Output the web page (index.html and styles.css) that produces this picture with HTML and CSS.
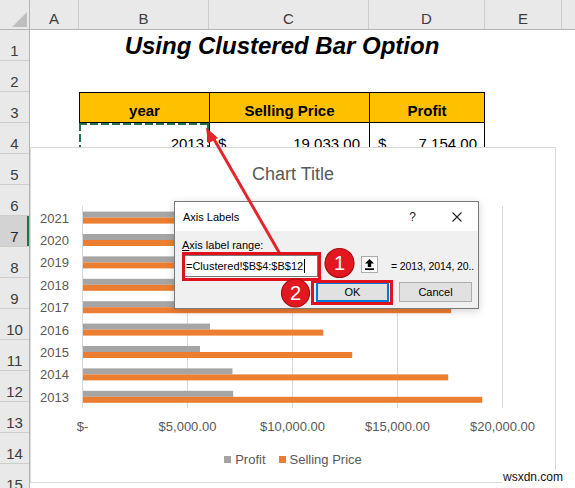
FILE: index.html
```html
<!DOCTYPE html>
<html>
<head>
<meta charset="utf-8">
<title>Using Clustered Bar Option</title>
<link rel="stylesheet" href="styles.css">
</head>
<body>
<div class="sheet">
  <div class="corner"><span class="tri"></span></div>
  <div class="colheads">
    <div class="ch col-a">A</div>
    <div class="ch col-b">B</div>
    <div class="ch col-c">C</div>
    <div class="ch col-d">D</div>
    <div class="ch col-e">E</div>
    <div class="ch col-f"></div>
  </div>
  <div class="rowheads">
    <div class="rh">1</div>
    <div class="rh">2</div>
    <div class="rh">3</div>
    <div class="rh">4</div>
    <div class="rh">5</div>
    <div class="rh">6</div>
    <div class="rh sel">7</div>
    <div class="rh">8</div>
    <div class="rh">9</div>
    <div class="rh">10</div>
    <div class="rh">11</div>
    <div class="rh">12</div>
    <div class="rh">13</div>
    <div class="rh">14</div>
    <div class="rh">15</div>
  </div>
  <div class="cells">
    <div class="title">Using Clustered Bar Option</div>
    <div class="th th-b">year</div>
    <div class="th th-c">Selling Price</div>
    <div class="th th-d">Profit</div>
    <div class="cell cell-b">2013</div>
    <div class="cell acct cell-c"><span>$</span><span>19,033.00</span></div>
    <div class="cell acct cell-d"><span>$</span><span>7,154.00</span></div>
  </div>

  <div class="chart">
    <div class="chart-title">Chart Title</div>
    <svg class="plot" width="524" height="243" viewBox="0 0 524 243">
      <g class="grid-lines">
        <line x1="51.5" y1="6" x2="51.5" y2="208"/>
        <line x1="156.5" y1="6" x2="156.5" y2="208"/>
        <line x1="261.5" y1="6" x2="261.5" y2="208"/>
        <line x1="366.5" y1="6" x2="366.5" y2="208"/>
        <line x1="471.5" y1="6" x2="471.5" y2="208"/>
      </g>
      <g class="bars-profit">
        <rect x="52" y="190.8" width="150.2" height="6"/>
        <rect x="52" y="168.4" width="149.5" height="6"/>
        <rect x="52" y="146" width="117" height="6"/>
        <rect x="52" y="123.6" width="127" height="6"/>
        <rect x="52" y="101.2" width="135" height="6"/>
        <rect x="52" y="78.8" width="142" height="6"/>
        <rect x="52" y="56.4" width="138" height="6"/>
        <rect x="52" y="34" width="128" height="6"/>
        <rect x="52" y="11.6" width="155" height="6"/>
      </g>
      <g class="bars-price">
        <rect x="52" y="196.8" width="399.2" height="6"/>
        <rect x="52" y="174.4" width="365.2" height="6"/>
        <rect x="52" y="152" width="269.2" height="6"/>
        <rect x="52" y="129.6" width="240.2" height="6"/>
        <rect x="52" y="107.2" width="368.2" height="6"/>
        <rect x="52" y="84.8" width="330" height="6"/>
        <rect x="52" y="62.4" width="310" height="6"/>
        <rect x="52" y="40" width="290" height="6"/>
        <rect x="52" y="17.6" width="345" height="6"/>
      </g>
      <g class="ylab">
        <text x="38" y="201.7">2013</text>
        <text x="38" y="179.3">2014</text>
        <text x="38" y="156.9">2015</text>
        <text x="38" y="134.5">2016</text>
        <text x="38" y="112.1">2017</text>
        <text x="38" y="89.7">2018</text>
        <text x="38" y="67.3">2019</text>
        <text x="38" y="44.9">2020</text>
        <text x="38" y="22.5">2021</text>
      </g>
      <g class="xlab">
        <text x="51.5" y="230.7">$-</text>
        <text x="156.5" y="230.7">$5,000.00</text>
        <text x="261.5" y="230.7">$10,000.00</text>
        <text x="366.5" y="230.7">$15,000.00</text>
        <text x="471.5" y="230.7">$20,000.00</text>
      </g>
    </svg>
    <div class="legend">
      <div class="leg-item"><span class="sw sw-profit"></span><span>Profit</span></div>
      <div class="leg-item"><span class="sw sw-price"></span><span>Selling Price</span></div>
    </div>
  </div>

  <div class="dialog">
    <div class="dlg-titlebar">
      <span class="dlg-title">Axis Labels</span>
      <span class="dlg-help">?</span>
      <svg class="dlg-close" width="10" height="10" viewBox="0 0 10 10"><path d="M0.5 0.5L9.5 9.5M9.5 0.5L0.5 9.5"/></svg>
    </div>
    <div class="dlg-body">
      <div class="dlg-label"><span class="ul">A</span>xis label range:</div>
      <div class="dlg-inputrow">
        <div class="dlg-input"><span class="caret">=Clustered!$B$4:$B$12</span></div>
        <div class="collapse-btn">
          <svg width="9" height="11" viewBox="0 0 9 11"><path d="M4.5 0L9 4.6H6.2V8H2.8V4.6H0Z"/><rect x="0" y="9.3" width="9" height="1.7"/></svg>
        </div>
        <div class="dlg-preview">= 2013, 2014, 20..</div>
      </div>
      <div class="dlg-buttons">
        <div class="btn btn-ok">OK</div>
        <div class="btn">Cancel</div>
      </div>
    </div>
  </div>

  <svg class="annot" width="575" height="488" viewBox="0 0 575 488">
    <line class="arrow-line" x1="280" y1="254" x2="211" y2="134"/>
    <polygon class="arrow-head" points="206,127.5 218,138 208,143.5"/>
    <rect class="hl" x="183.5" y="253.5" width="136" height="26"/>
    <rect class="hl" x="312.5" y="281.5" width="79" height="22"/>
    <circle class="badge" cx="339.5" cy="263" r="14.5"/>
    <text class="badge-num" x="339.5" y="270">1</text>
    <circle class="badge" cx="295.5" cy="293" r="14"/>
    <text class="badge-num" x="295.5" y="300">2</text>
  </svg>

  <div class="watermark">wsxdn.com</div>
</div>
</body>
</html>
```

FILE: styles.css
```css
html, body {
  margin: 0;
  padding: 0;
  background: #ffffff;
}

body {
  font-family: "Liberation Sans", Arial, sans-serif;
  color: #000;
}

.sheet {
  position: relative;
  width: 575px;
  height: 488px;
  overflow: hidden;
  display: grid;
  grid-template-columns: 30px 545px;
  grid-template-rows: 30px 458px;
  background: #fff;
}

/* ---------- headers ---------- */
.corner {
  background: #e9e9e9;
  border-right: 1px solid #b4b4b4;
  border-bottom: 1px solid #b4b4b4;
  box-sizing: border-box;
  display: flex;
  justify-content: flex-end;
  align-items: flex-end;
  padding: 0 2px 2px 0;
}

.tri {
  width: 15px;
  height: 15px;
  background: #bfbfbf;
  clip-path: polygon(100% 0, 100% 100%, 0 100%);
}

.colheads {
  display: flex;
  background: #e9e9e9;
  border-bottom: 1px solid #b4b4b4;
  box-sizing: border-box;
}

.ch {
  box-sizing: border-box;
  height: 29px;
  border-right: 1px solid #cdcdcd;
  text-align: center;
  font-size: 15px;
  line-height: 17px;
  padding-top: 10px;
  color: #3c3c3c;
  flex: none;
}

.col-a { width: 49px; }
.col-b { width: 130px; }
.col-c { width: 160px; }
.col-d { width: 116px; }
.col-e { width: 77px; }
.col-f { width: 13px; border-right: none; }

.rowheads {
  display: flex;
  flex-direction: column;
  background: #e9e9e9;
  border-right: 1px solid #b4b4b4;
  box-sizing: border-box;
}

.rh {
  flex: none;
  height: 31px;
  box-sizing: border-box;
  border-bottom: 1px solid #cdcdcd;
  text-align: center;
  font-size: 15px;
  line-height: 17px;
  padding-top: 12px;
  color: #3c3c3c;
}

.rh.sel {
  background: #d3d3d3;
  box-shadow: inset -2px 0 0 #217346;
  color: #262626;
}

/* ---------- cells ---------- */
.cells {
  display: grid;
  grid-template-columns: 49px 130px 160px 116px 77px 1fr;
  grid-template-rows: repeat(15, 31px);
  background: #fff;
}

.title {
  grid-column: 2 / 5;
  grid-row: 1;
  text-align: center;
  font-weight: bold;
  font-style: italic;
  font-size: 24px;
  line-height: 31px;
  color: #000;
}

.th {
  grid-row: 3;
  background: #ffc000;
  border-top: 1px solid #000;
  border-bottom: 1px solid #000;
  border-left: 1px solid #000;
  box-sizing: border-box;
  display: flex;
  justify-content: center;
  align-items: flex-end;
  font-weight: bold;
  font-size: 15px;
  line-height: 17px;
  padding-bottom: 3px;
}

.th-b { grid-column: 2; }
.th-c { grid-column: 3; }
.th-d { grid-column: 4; border-right: 1px solid #000; }

.cell {
  grid-row: 4;
  box-sizing: border-box;
  font-size: 15px;
  line-height: 17px;
  display: flex;
  align-items: flex-end;
  padding-bottom: 2px;
  position: relative;
}

.cell-b {
  grid-column: 2;
  justify-content: flex-end;
  padding-right: 5px;
}

.cell-b::after {
  content: "";
  position: absolute;
  inset: 0;
  background:
    repeating-linear-gradient(90deg, #217346 0 8px, transparent 8px 11px) top left / 100% 2px no-repeat,
    repeating-linear-gradient(180deg, #217346 0 8px, transparent 8px 11px) top left / 2px 100% no-repeat,
    repeating-linear-gradient(180deg, #217346 0 8px, transparent 8px 11px) top right / 2px 100% no-repeat;
}

.acct {
  justify-content: space-between;
  border-left: 1px solid #000;
  padding-left: 8px;
}

.cell-c { grid-column: 3; padding-right: 9px; }
.cell-d { grid-column: 4; padding-right: 7px; border-right: 1px solid #000; }

/* ---------- chart ---------- */
.chart {
  position: absolute;
  left: 30px;
  top: 147px;
  width: 526px;
  height: 336px;
  box-sizing: border-box;
  border: 1px solid #d9d9d9;
  background: #fff;
  display: flex;
  flex-direction: column;
}

.chart-title {
  height: 52px;
  line-height: 52px;
  text-align: center;
  font-size: 18px;
  color: #595959;
  flex: none;
}

.plot {
  display: block;
  flex: none;
}

.grid-lines line {
  stroke: #d9d9d9;
  stroke-width: 1;
}

.bars-profit rect { fill: #a5a5a5; }
.bars-price rect { fill: #ed7d31; }

.ylab text {
  font-family: "Liberation Sans", Arial, sans-serif;
  font-size: 13px;
  fill: #595959;
  text-anchor: end;
}

.xlab text {
  font-family: "Liberation Sans", Arial, sans-serif;
  font-size: 13px;
  fill: #595959;
  text-anchor: middle;
}

.legend {
  height: 32px;
  display: flex;
  justify-content: center;
  align-items: center;
  gap: 13px;
  font-size: 13px;
  line-height: 15px;
  color: #595959;
  flex: none;
}

.leg-item {
  display: flex;
  align-items: center;
  gap: 4px;
}

.sw {
  width: 7px;
  height: 7px;
  display: block;
}

.sw-profit { background: #a5a5a5; }
.sw-price { background: #ed7d31; }

/* ---------- dialog ---------- */
.dialog {
  position: absolute;
  left: 174px;
  top: 201px;
  width: 305px;
  height: 108px;
  box-sizing: border-box;
  border: 1px solid #7a7a7a;
  background: #f0f0f0;
  box-shadow: 0 2px 8px rgba(0, 0, 0, 0.18);
  font-size: 11px;
  display: flex;
  flex-direction: column;
}

.dlg-titlebar {
  height: 29px;
  flex: none;
  background: #fff;
  display: flex;
  align-items: center;
  padding-left: 8px;
  padding-right: 16px;
}

.dlg-title {
  font-size: 11px;
  color: #000;
}

.dlg-help {
  margin-left: auto;
  font-size: 12px;
  color: #222;
  margin-right: 36px;
}

.dlg-close path {
  stroke: #222;
  stroke-width: 1.1;
  fill: none;
}

.dlg-body {
  padding: 7px 4px 0 7px;
  display: flex;
  flex-direction: column;
}

.dlg-label {
  line-height: 15px;
  height: 15px;
}

.ul { text-decoration: underline; }

.dlg-inputrow {
  margin-top: 2px;
  height: 22px;
  display: flex;
  align-items: center;
}

.dlg-input {
  margin-left: 2px;
  width: 134px;
  height: 22px;
  box-sizing: border-box;
  background: #fff;
  border: 1px solid #7a7a7a;
  display: flex;
  align-items: center;
  padding-left: 1px;
  font-size: 11px;
  flex: none;
}

.caret {
  border-right: 1px solid #000;
  padding-right: 1px;
  line-height: 14px;
}

.collapse-btn {
  margin-left: 43px;
  width: 17px;
  height: 17px;
  box-sizing: border-box;
  background: #fdfdfd;
  border: 1px solid #adadad;
  display: flex;
  align-items: center;
  justify-content: center;
  flex: none;
  align-self: flex-start;
  margin-top: 1px;
}

.collapse-btn svg { fill: #000; display: block; }

.dlg-preview {
  margin-left: 13px;
  white-space: nowrap;
  font-size: 10.5px;
  letter-spacing: -0.1px;
  flex: none;
}

.dlg-buttons {
  margin-top: 5px;
  margin-right: 2px;
  display: flex;
  justify-content: flex-end;
  gap: 10px;
}

.btn {
  width: 73px;
  height: 20px;
  box-sizing: border-box;
  background: #e1e1e1;
  border: 1px solid #adadad;
  display: flex;
  align-items: center;
  justify-content: center;
  font-size: 11px;
}

.btn-ok {
  border: 2px solid #0078d7;
}

/* ---------- annotations ---------- */
.annot {
  position: absolute;
  left: 0;
  top: 0;
  pointer-events: none;
}

.arrow-line {
  stroke: #e3262b;
  stroke-width: 3;
}

.arrow-head { fill: #e3262b; }

.hl {
  fill: none;
  stroke: #e1121b;
  stroke-width: 3;
}

.badge {
  fill: #e3171f;
  stroke: #a80d12;
  stroke-width: 1.2;
}

.badge-num {
  font-family: "Liberation Sans", Arial, sans-serif;
  font-size: 20px;
  fill: #fff;
  text-anchor: middle;
}

.watermark {
  position: absolute;
  right: 11px;
  top: 470px;
  font-size: 12px;
  line-height: 14px;
  background: #fff;
  color: #111;
  padding: 0 1px;
}
```
